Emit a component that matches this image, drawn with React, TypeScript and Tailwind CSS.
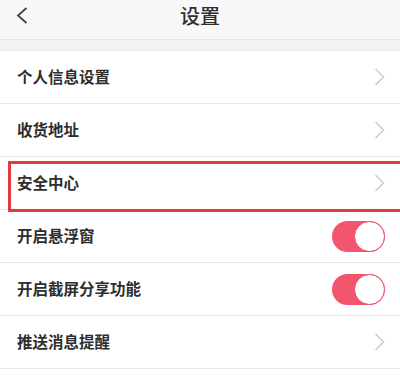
import React from "react"

type Item = { label: string; kind: "link" | "toggle"; marked?: boolean }

const items: Item[] = [
  { label: "个人信息设置", kind: "link" },
  { label: "收货地址", kind: "link" },
  { label: "安全中心", kind: "link", marked: true },
  { label: "开启悬浮窗", kind: "toggle" },
  { label: "开启截屏分享功能", kind: "toggle" },
  { label: "推送消息提醒", kind: "link" },
]

function Chevron() {
  return (
    <svg width="11" height="18" viewBox="0 0 11 18" fill="none">
      <polyline points="1.5,1 9.5,9 1.5,17" stroke="#c9c9c9" strokeWidth="1.4" />
    </svg>
  )
}

function Toggle() {
  return (
    <div className="relative w-[53px] h-[31px] rounded-full bg-[#f2566f]">
      <div className="absolute right-0 top-0 w-[31px] h-[31px] rounded-full bg-white border-[1.5px] border-[#e8506a]" />
    </div>
  )
}

export default function App() {
  return (
    <div
      className="w-[400px] h-[379px] bg-white overflow-hidden"
      style={{ fontFamily: '"Noto Sans CJK SC", "Noto Sans", sans-serif' }}
    >
      {/* 顶部导航 */}
      <div className="relative h-[40px] bg-[#f8f8f8] border-b border-[#e6e6e6] flex items-center justify-center">
        <svg className="absolute left-[16px] top-[7px]" width="12" height="17" viewBox="0 0 12 17" fill="none">
          <polyline points="10.5,1 2,8.5 10.5,16" stroke="#444" strokeWidth="1.8" />
        </svg>
        <span className="text-[20px] text-[#2e2e2e] font-medium -mt-[8px]">设置</span>
      </div>
      <div className="h-[11px] bg-[#f3f3f3] border-b border-[#e6e6e6]" />

      {/* 列表 */}
      {items.map((item) => (
        <div
          key={item.label}
          className="relative h-[53px] border-b border-[#e8e8e8] flex items-center justify-between pl-[17px] pr-[15px]"
        >
          <span className="text-[15.5px] text-[#2e2e2e] font-semibold">{item.label}</span>
          {item.kind === "link" ? <Chevron /> : <Toggle />}
          {item.marked && (
            <div className="absolute left-[8px] -right-[4px] top-[4px] -bottom-[3px] border-[3px] border-[#e23b3b]" />
          )}
        </div>
      ))}
    </div>
  )
}
